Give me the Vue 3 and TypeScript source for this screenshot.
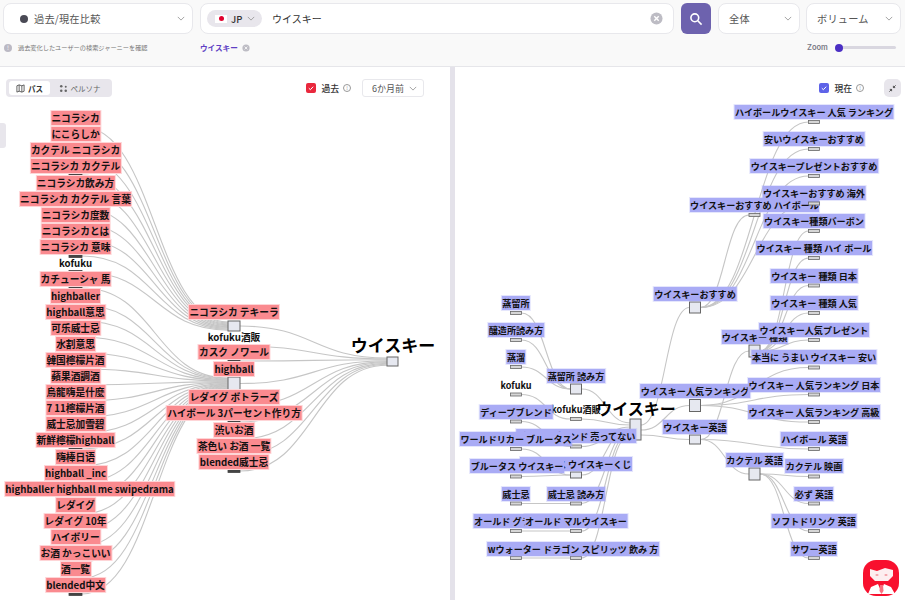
<script setup lang="ts">
interface Node {
  id: string
  label: string
  x: number
  y: number
  ny: number
  h?: number
  plain?: boolean
}

interface Link {
  x0: number
  y0: number
  x1: number
  y1: number
}

const leftLabels = [
  'ニコラシカ', 'にこらしか', 'カクテル ニコラシカ', 'ニコラシカ カクテル', 'ニコラシカ飲み方',
  'ニコラシカ カクテル 言葉', 'ニコラシカ度数', 'ニコラシカとは', 'ニコラシカ 意味', 'kofuku',
  'カチューシャ 馬', 'highballer', 'highball意思', '可乐威士忌', '水割意思',
  '韓国檸檬片酒', '蘋果酒調酒', '烏龍嗨是什麼', '7 11檸檬片酒', '威士忌加雪碧',
  '新鮮檸檬highball', '嗨棒日语', 'highball _inc', 'highballer highball me swipedrama', 'レダイグ',
  'レダイグ 10年', 'ハイボリー', 'お酒 かっこいい', '酒一覧', 'blended中文'
]
const leftY = [118, 134, 150, 166, 183, 199, 215, 231, 247, 263, 279, 296, 312, 328, 344, 360, 376, 392, 408, 424, 440, 457, 473, 489, 505, 521, 537, 553, 569, 585]

const leftRows: Node[] = leftLabels.map((label, i) => ({
  id: 'l' + i,
  label,
  // 一番長いラベルだけ左端で止まる
  x: label.includes('swipedrama') ? 89.5 : 75.5,
  y: leftY[i],
  ny: leftY[i] + 9,
  plain: label === 'kofuku'
}))

const leftMid: Node[] = [
  { id: 'm0', label: 'ニコラシカ テキーラ', x: 234, y: 312, ny: 326, h: 10 },
  { id: 'm1', label: 'kofuku酒販', x: 234, y: 337, ny: 346, plain: true },
  { id: 'm2', label: 'カスク ノワール', x: 234, y: 352, ny: 361 },
  { id: 'm3', label: 'highball', x: 234, y: 369, ny: 383.5, h: 13 },
  { id: 'm4', label: 'レダイグ ボトラーズ', x: 234, y: 397, ny: 406 },
  { id: 'm5', label: 'ハイボール 3パーセント作り方', x: 234, y: 413, ny: 422 },
  { id: 'm6', label: '渋いお酒', x: 234, y: 430, ny: 439 },
  { id: 'm7', label: '茶色い お酒 一覧', x: 234, y: 446, ny: 455 },
  { id: 'm8', label: 'blended威士忌', x: 234, y: 462, ny: 471 }
]

function curve(l: Link) {
  const mx = (l.x0 + l.x1) / 2
  return `M${l.x0} ${l.y0}C${mx} ${l.y0} ${mx} ${l.y1} ${l.x1} ${l.y1}`
}

const leftLinks: Link[] = [
  ...leftRows.slice(0, 10).map((n, i) => ({ x0: 82, y0: n.ny, x1: 228, y1: 322 + i * 0.9 })),
  ...leftRows.slice(10).map((n, i) => ({ x0: 82, y0: n.ny, x1: 228, y1: 378 + i * 0.6 })),
  ...leftMid.map((n, i) => ({ x0: 240, y0: n.ny, x1: 387, y1: 358 + i * 0.9 }))
]

const rightNodes: Node[] = [
  { id: 'a1', label: 'ブルータス ウイスキーくじ', x: 576, y: 464, ny: 475, h: 6 },
  { id: 'a0', label: 'ディープブレンド 売ってない', x: 576, y: 436, ny: 446.5 },
  { id: 'a2', label: 'kofuku酒販', x: 576, y: 409, ny: 419, plain: true },
  { id: 'b0', label: '蒸留所', x: 516, y: 303, ny: 313 },
  { id: 'b1', label: '醸造所読み方', x: 516, y: 330, ny: 340 },
  { id: 'b2', label: '蒸溜', x: 516, y: 357, ny: 367 },
  { id: 'b3', label: 'kofuku', x: 516, y: 385, ny: 394.5, plain: true },
  { id: 'b4', label: 'ディープブレンド', x: 516, y: 412, ny: 421.5 },
  { id: 'b5', label: 'ワールドリカー ブルータス', x: 516, y: 439, ny: 449 },
  { id: 'b6', label: 'ブルータス ウイスキー', x: 517, y: 466, ny: 476.5 },
  { id: 'b7', label: '威士忌', x: 516, y: 494, ny: 503.5 },
  { id: 'b8', label: 'オールド グランダー', x: 516, y: 521, ny: 531 },
  { id: 'a3', label: '蒸留所 読み方', x: 576, y: 376, ny: 389, h: 10 },
  { id: 'a4', label: '威士忌 読み方', x: 576, y: 494, ny: 503.5 },
  { id: 'a5', label: 'オールド マルウイスキー', x: 576, y: 521, ny: 531 },
  { id: 'a6', label: 'wウォーター ドラゴン スピリッツ 飲み 方', x: 573, y: 549, ny: 558 },
  { id: 'b9', label: '', x: 516, y: 549, ny: 558, plain: true },
  { id: 'c0', label: 'ウイスキーおすすめ', x: 695, y: 294, ny: 307.5, h: 11 },
  { id: 'c1', label: 'ウイスキー人気ランキング', x: 695, y: 391, ny: 405.5, h: 12 },
  { id: 'c2', label: 'ウイスキー英語', x: 695, y: 427, ny: 439.5, h: 9 },
  { id: 'd0', label: 'ウイスキーおすすめ ハイボール', x: 754.5, y: 205, ny: 215 },
  { id: 'd1', label: 'ウイスキー 種類', x: 754.5, y: 337, ny: 351, h: 12 },
  { id: 'd2', label: 'カクテル 英語', x: 754.5, y: 460, ny: 474, h: 12 },
  { id: 'e0', label: 'ハイボールウイスキー 人気 ランキング', x: 814, y: 112, ny: 122 },
  { id: 'e1', label: '安いウイスキーおすすめ', x: 814, y: 139, ny: 149 },
  { id: 'e2', label: 'ウイスキープレゼントおすすめ', x: 814, y: 166, ny: 176 },
  { id: 'e3', label: 'ウイスキーおすすめ 海外', x: 814, y: 193, ny: 203.5 },
  { id: 'e4', label: 'ウイスキー種類バーボン', x: 814, y: 221, ny: 231 },
  { id: 'e5', label: 'ウイスキー 種類 ハイ ボール', x: 814, y: 248, ny: 258 },
  { id: 'e6', label: 'ウイスキー 種類 日本', x: 814, y: 276, ny: 285.5 },
  { id: 'e7', label: 'ウイスキー 種類 人気', x: 814, y: 303, ny: 313 },
  { id: 'e8', label: 'ウイスキー人気プレゼント', x: 814, y: 330, ny: 340 },
  { id: 'e9', label: '本当に うまい ウイスキー 安い', x: 814, y: 357, ny: 367.5 },
  { id: 'e10', label: 'ウイスキー 人気ランキング 日本', x: 814, y: 385, ny: 394.5 },
  { id: 'e11', label: 'ウイスキー 人気ランキング 高級', x: 814, y: 412, ny: 422 },
  { id: 'e12', label: 'ハイボール 英語', x: 814, y: 439, ny: 449 },
  { id: 'e13', label: 'カクテル 映画', x: 814, y: 466, ny: 476.5 },
  { id: 'e14', label: '必ず 英語', x: 814, y: 494, ny: 503.5 },
  { id: 'e15', label: 'ソフトドリンク 英語', x: 814, y: 521, ny: 531 },
  { id: 'e16', label: 'サワー英語', x: 814, y: 549, ny: 558 }
]

const barX: Record<string, number> = { a: 576, b: 516, c: 695, d: 754.5, e: 814 }
const rightBoxes = rightNodes.map(n => ({ ...n, nx: barX[n.id[0]] }))

const byId = (id: string) => rightBoxes.find(n => n.id === id)!

const edges: [string, string][] = [
  ['b0', 'a3'], ['b1', 'a3'], ['b2', 'a3'], ['b3', 'a2'], ['b4', 'a0'], ['b5', 'a1'],
  ['b6', 'a1'], ['b7', 'a4'], ['b8', 'a5'], ['b9', 'a6'],
  ['c0', 'd0'], ['c0', 'e0'], ['c0', 'e1'], ['c0', 'e2'], ['c0', 'e3'],
  ['d1', 'e4'], ['d1', 'e5'], ['d1', 'e6'], ['d1', 'e7'], ['d1', 'e8'],
  ['c1', 'e9'], ['c1', 'e10'], ['c1', 'e11'],
  ['c2', 'd1'], ['c2', 'd2'], ['c2', 'e12'],
  ['d2', 'e13'], ['d2', 'e14'], ['d2', 'e15'], ['d2', 'e16']
]

const rightLinks: Link[] = [
  ...edges.map(([a, b]) => ({
    x0: byId(a).nx + 5.5, y0: byId(a).ny, x1: byId(b).nx - 5.5, y1: byId(b).ny
  })),
  ...['a3', 'a2', 'a0', 'a1', 'a4', 'a5', 'a6'].map((id, i) => ({
    x0: byId(id).nx + 5.5, y0: byId(id).ny, x1: 630, y1: 423 + i * 2
  })),
  ...['c0', 'c1', 'c2'].map((id, i) => ({
    x0: 641, y0: 425 + i * 5, x1: byId(id).nx - 5.5, y1: byId(id).ny
  }))
]

const leftPaths = leftLinks.map(curve)
const rightPaths = rightLinks.map(curve)
const leftAll = [...leftRows.map(n => ({ ...n, nx: 75.5, w: 13 })), ...leftMid.map(n => ({ ...n, nx: 234, w: 12 }))]
</script>

<template>
  <div class="app">
    <header class="topbar">
      <div class="row">
        <div class="select mode">
          <span class="mode-dot"></span>
          <span class="select-text">過去/現在比較</span>
          <svg class="chev" viewBox="0 0 10 6"><path d="M1 1l4 4 4-4" /></svg>
        </div>
        <div class="search">
          <div class="pill">
            <span class="flag"><i></i></span>
            <b>JP</b>
            <svg class="chev" viewBox="0 0 10 6"><path d="M1 1l4 4 4-4" /></svg>
          </div>
          <span class="query">ウイスキー</span>
          <svg class="clear" viewBox="0 0 14 14">
            <circle cx="7" cy="7" r="6.5" fill="#bdbcc4" />
            <path d="M4.6 4.6l4.8 4.8M9.4 4.6l-4.8 4.8" stroke="#fff" stroke-width="1.5" />
          </svg>
        </div>
        <button class="go">
          <svg viewBox="0 0 14 14" width="14" height="14" fill="none" stroke="#fff" stroke-width="1.6">
            <circle cx="5.8" cy="5.8" r="3.9" />
            <path d="M8.8 8.8l3.8 3.8" />
          </svg>
        </button>
        <div class="select scope">
          <span class="select-text">全体</span>
          <svg class="chev" viewBox="0 0 10 6"><path d="M1 1l4 4 4-4" /></svg>
        </div>
        <div class="select metric">
          <span class="select-text">ボリューム</span>
          <svg class="chev" viewBox="0 0 10 6"><path d="M1 1l4 4 4-4" /></svg>
        </div>
      </div>
      <div class="row sub">
        <div class="hint">
          <span class="hint-i">!</span>
          過去変化したユーザーの検索ジャーニーを確認
        </div>
        <div class="tag">
          <span>ウイスキー</span>
          <svg viewBox="0 0 8 8" width="8" height="8">
            <circle cx="4" cy="4" r="3.6" fill="#bdbcc4" />
            <path d="M2.6 2.6l2.8 2.8M5.4 2.6l-2.8 2.8" stroke="#fff" stroke-width=".8" />
          </svg>
        </div>
        <div class="zoom">
          <span>Zoom</span>
          <div class="track"><i></i></div>
        </div>
      </div>
    </header>

    <main class="panels">
      <section class="panel past">
        <svg class="links" viewBox="0 67 450 533">
          <path v-for="(d, i) in leftPaths" :key="i" :d="d" />
          <rect
            v-for="n in leftAll"
            :key="n.id"
            :class="n.h ? 'box' : 'bar dark'"
            :x="n.nx - n.w / 2"
            :y="n.ny - (n.h || 3) / 2"
            :width="n.w"
            :height="n.h || 3"
          />
          <rect class="box" x="387" y="357" width="11" height="9" />
        </svg>
        <span
          v-for="n in leftAll"
          :key="n.id"
          class="label red"
          :class="{ plain: n.plain }"
          :style="{ left: n.x + 'px', top: n.y - 67 + 'px' }"
        >{{ n.label }}</span>
        <span class="root" :style="{ left: '393px', top: '267px' }">ウイスキー</span>

        <div class="handle"></div>
        <div class="toolbar">
          <div class="tabs">
            <div class="tab on">
              <svg viewBox="0 0 10 10" width="9" height="9" fill="none" stroke="#444" stroke-width=".9">
                <path d="M1 2l2.5-1 3 1L9 1v7L6.5 9l-3-1L1 9z" />
                <path d="M3.5 1v7M6.5 2v7" />
              </svg>
              パス
            </div>
            <div class="tab">
              <svg viewBox="0 0 10 10" width="9" height="9" fill="#666">
                <circle cx="2.5" cy="2.5" r="1.4" />
                <circle cx="7.5" cy="3" r="1.1" />
                <circle cx="2.5" cy="7.5" r="1.4" />
                <circle cx="7.5" cy="7.5" r="1.4" />
              </svg>
              ペルソナ
            </div>
          </div>
          <div class="spacer"></div>
          <span class="check red-check"><svg viewBox="0 0 10 10"><path d="M2.8 5.2l1.6 1.5 2.8-3" /></svg></span>
          <span class="check-label">過去</span>
          <span class="info">!</span>
          <div class="period">
            6か月前
            <svg class="chev" viewBox="0 0 10 6"><path d="M1 1l4 4 4-4" /></svg>
          </div>
        </div>
      </section>

      <div class="divider"></div>

      <section class="panel now">
        <svg class="links" viewBox="455 67 450 533">
          <path v-for="(d, i) in rightPaths" :key="i" :d="d" />
          <rect
            v-for="n in rightBoxes"
            :key="n.id"
            :class="n.h ? 'box' : 'bar'"
            :x="n.nx - 5.5"
            :y="n.ny - (n.h || 3) / 2"
            width="11"
            :height="n.h || 3"
          />
          <rect class="box" x="630" y="419" width="11" height="21" />
        </svg>
        <template v-for="n in rightBoxes" :key="n.id">
          <span
            v-if="n.label"
            class="label blue"
            :class="{ plain: n.plain }"
            :style="{ left: n.x - 455 + 'px', top: n.y - 67 + 'px' }"
          >{{ n.label }}</span>
        </template>
        <!-- このバーだけ隣のラベルの上に出る -->
        <svg class="links" viewBox="455 67 450 533">
          <rect class="bar" x="808.5" y="202" width="11" height="3" />
        </svg>
        <span class="root small" :style="{ left: '181px', top: '330px' }">ウイスキー</span>

        <div class="toolbar">
          <div class="spacer"></div>
          <span class="check blue-check"><svg viewBox="0 0 10 10"><path d="M2.8 5.2l1.6 1.5 2.8-3" /></svg></span>
          <span class="check-label">現在</span>
          <span class="info">!</span>
          <button class="shrink">
            <svg viewBox="0 0 10 10" width="9" height="9" fill="none" stroke="#444" stroke-width="1">
              <path d="M1.5 8.5L4 6M4 8V6H2M8.5 1.5L6 4M6 2v2h2" />
            </svg>
          </button>
        </div>
      </section>
    </main>

    <div class="bot">
      <svg viewBox="0 0 36 36" width="36" height="36">
        <rect width="36" height="36" rx="13" fill="#f8102e" />
        <path d="M7 9l7 2 8-3 8 2v6l-5 5H12l-5-5z" fill="#fdeef0" />
        <ellipse cx="14" cy="15" rx="1.6" ry="1" fill="#f4a0a8" />
        <ellipse cx="23" cy="15" rx="1.6" ry="1" fill="#f4a0a8" />
        <path d="M5 34l3-7 7-3 3 7 3-7 7 3 4 7z" fill="#fff" />
        <path d="M17 25h3l.5 6-2 3-2-3z" fill="#f8707e" />
      </svg>
    </div>
  </div>
</template>

<style scoped>
.app {
  position: relative;
  width: 905px;
  height: 600px;
  overflow: hidden;
  display: flex;
  flex-direction: column;
  background: #fff;
  font-family: "Noto Sans CJK JP", "Noto Sans", sans-serif;
  color: #222;
}

.topbar {
  height: 67px;
  box-sizing: border-box;
  padding: 3px 4px 0 3px;
  background: #f9f9f9;
  border-bottom: 1px solid #e6e6ea;
  flex-shrink: 0;
}

.row {
  display: flex;
  align-items: center;
}

.select {
  height: 30.5px;
  box-sizing: border-box;
  background: #fff;
  border: 1px solid #e8e8ec;
  border-radius: 8px;
  display: flex;
  align-items: center;
  padding: 0 7px 0 10px;
}

.select-text {
  flex: 1;
  font-size: 10.2px;
  color: #555;
  letter-spacing: .2px;
}

.chev {
  width: 8px;
  height: 5px;
  fill: none;
  stroke: #999;
  stroke-width: 1.1;
  flex-shrink: 0;
}

.mode {
  width: 190px;
  padding-left: 16px;
}

.mode-dot {
  width: 8px;
  height: 8px;
  border-radius: 50%;
  background: #4a4a55;
  margin-right: 6px;
}

.search {
  width: 474px;
  height: 30.5px;
  box-sizing: border-box;
  margin-left: 7px;
  background: #fff;
  border: 1px solid #e8e8ec;
  border-radius: 8px;
  display: flex;
  align-items: center;
  padding: 0 10px 0 6px;
}

.pill {
  width: 55px;
  height: 17px;
  box-sizing: border-box;
  border-radius: 9px;
  background: #e8e6ec;
  display: flex;
  align-items: center;
  padding-left: 8px;
  font-size: 9.5px;
  color: #333;
}

.pill b {
  font-weight: 500;
  margin: 0 5px 0 4px;
}

.flag {
  width: 12px;
  height: 8px;
  background: #fff;
  display: flex;
  align-items: center;
  justify-content: center;
}

.flag i {
  width: 5px;
  height: 5px;
  border-radius: 50%;
  background: #e0002d;
}

.query {
  flex: 1;
  margin-left: 10px;
  font-size: 10px;
  color: #333;
}

.clear {
  width: 13px;
  height: 13px;
}

.go {
  width: 30px;
  height: 31px;
  margin-left: 7px;
  border: 0;
  padding: 0;
  border-radius: 6px;
  background: #6d62ae;
  display: flex;
  align-items: center;
  justify-content: center;
}

.scope {
  width: 82px;
  margin-left: 7px;
}

.metric {
  width: 95px;
  margin-left: 6px;
}

.sub {
  margin-top: 5.5px;
  height: 16px;
}

.hint {
  width: 197px;
  padding-left: 1px;
  box-sizing: border-box;
  display: flex;
  align-items: center;
  font-size: 6.2px;
  color: #777;
}

.hint-i {
  width: 8px;
  height: 8px;
  border-radius: 50%;
  margin: 0 6px 0 0;
  background: #bbb9c4;
  color: #fff;
  font-size: 6px;
  line-height: 8px;
  text-align: center;
}

.tag {
  display: flex;
  align-items: center;
  font-size: 7.6px;
  font-weight: 700;
  color: #5f3fc4;
}

.tag svg {
  margin-left: 4px;
}

.zoom {
  margin-left: auto;
  width: 94px;
  display: flex;
  align-items: center;
  font-family: Inter, sans-serif;
  font-size: 7.5px;
  font-weight: 600;
  color: #7a7a85;
}

.track {
  position: relative;
  width: 57px;
  height: 3px;
  margin-left: 11px;
  background: #d9d7e0;
  border-radius: 2px;
}

.track i {
  position: absolute;
  left: -3.5px;
  top: -2.5px;
  width: 8px;
  height: 8px;
  border-radius: 50%;
  background: #4b2fc4;
}

.panels {
  flex: 1;
  display: flex;
  min-height: 0;
}

.panel {
  position: relative;
  width: 450px;
}

.divider {
  width: 5px;
  background: #e4e2ea;
}

.links {
  position: absolute;
  left: 0;
  top: 0;
  width: 450px;
  height: 533px;
  overflow: hidden;
}

.links path {
  fill: none;
  stroke: #c6c6c6;
  stroke-width: 1.1;
}

.box {
  fill: #e6e8f0;
  stroke: #666;
  stroke-width: 1;
}

.bar {
  fill: #d6d6d6;
  stroke: #666;
  stroke-width: .8;
}

.bar.dark {
  fill: #444;
  stroke: #444;
}

.label {
  position: absolute;
  transform: translate(-50%, -50%);
  white-space: nowrap;
  padding: 0 .5px;
  height: 14px;
  line-height: 14px;
  font-weight: 700;
  color: #111;
}

.label.red {
  font-size: 9.7px;
  background: #fa8a8f;
  box-shadow: 0 0 0 1px #fed5d7;
}

.label.blue {
  font-size: 9.1px;
  background: #a9abf5;
  box-shadow: 0 0 0 1px rgba(169, 171, 245, .3);
}

.label.plain {
  background: transparent;
  box-shadow: none;
}

.root {
  position: absolute;
  transform: translateX(-50%);
  white-space: nowrap;
  font-size: 17px;
  line-height: 22px;
  font-weight: 700;
  color: #000;
}

.root.small {
  font-size: 16px;
}

.toolbar {
  position: relative;
  display: flex;
  align-items: center;
  height: 18px;
  margin-top: 12px;
  padding: 0 26px 0 6px;
}

.now .toolbar {
  padding-right: 4px;
}

.spacer {
  flex: 1;
}

.tabs {
  width: 106px;
  height: 18px;
  box-sizing: border-box;
  padding: 2px 3px;
  display: flex;
  background: #e8e6ec;
  border-radius: 4px;
}

.tab {
  display: flex;
  align-items: center;
  justify-content: center;
  gap: 3px;
  flex: 1;
  font-size: 7.5px;
  color: #666;
}

.tab.on {
  flex: none;
  width: 41px;
  background: #fff;
  border-radius: 3px;
  color: #333;
  font-weight: 700;
}

.check {
  width: 10px;
  height: 10px;
  border-radius: 2px;
  display: flex;
}

.check svg {
  fill: none;
  stroke: #fff;
  stroke-width: 1;
}

.red-check {
  background: #e9283d;
}

.blue-check {
  background: #5e63e8;
}

.check-label {
  margin-left: 5px;
  font-size: 8.8px;
  font-weight: 500;
  color: #333;
}

.info {
  width: 8px;
  height: 8px;
  box-sizing: border-box;
  margin-left: 4px;
  border: 1px solid #999;
  border-radius: 50%;
  color: #888;
  font-size: 5px;
  line-height: 6px;
  text-align: center;
}

.period {
  width: 62px;
  height: 18px;
  box-sizing: border-box;
  margin-left: 11px;
  border: 1px solid #e8e8ec;
  border-radius: 3px;
  background: #fff;
  display: flex;
  align-items: center;
  gap: 5px;
  padding-left: 9px;
  font-size: 9px;
  color: #555;
}

.shrink {
  width: 17px;
  height: 18px;
  margin-left: 20px;
  padding: 0;
  border: 0;
  border-radius: 5px;
  background: #e8e6ec;
  display: flex;
  align-items: center;
  justify-content: center;
}

/* 折叠手柄 */
.handle {
  position: absolute;
  left: 0;
  top: 56px;
  width: 6px;
  height: 25px;
  border-radius: 0 3px 3px 0;
  background: #e8e6ec;
}

.bot {
  position: absolute;
  right: 6px;
  bottom: 4px;
  width: 36px;
  height: 36px;
}
</style>
